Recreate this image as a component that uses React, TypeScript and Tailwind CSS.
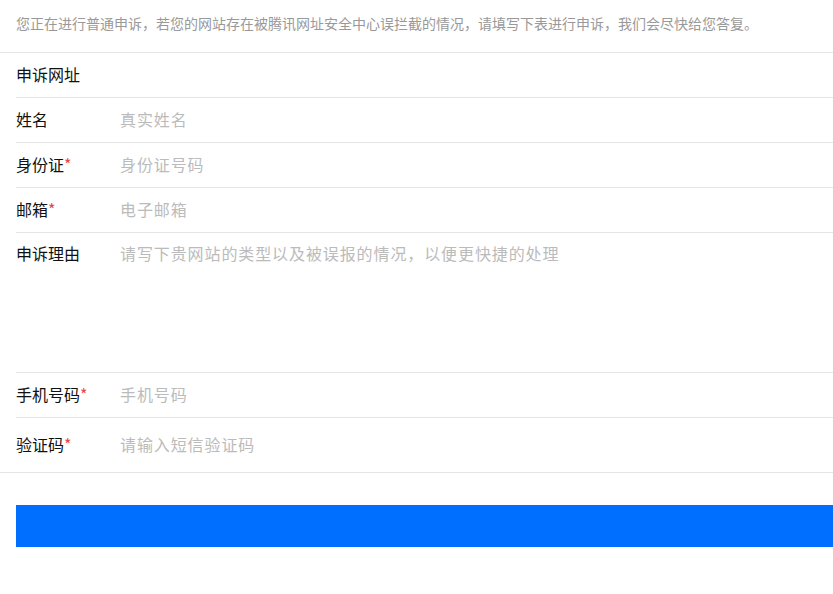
const FONT = "font-['Microsoft_YaHei','Noto_Sans_CJK_SC',sans-serif]";

function Label({ text, required }: { text: string; required?: boolean }) {
  return (
    <span className="w-[105px] shrink-0 text-[16px] text-[#111]">
      {text}
      {required ? <span className="text-[#e54545]">*</span> : null}
    </span>
  );
}

function Row({ label, placeholder, required }: { label: string; placeholder?: string; required?: boolean }) {
  return (
    <div className="ml-4 flex h-[45px] items-center border-b border-[#e5e5e5] pb-[3px]">
      <Label text={label} required={required} />
      {placeholder ? <span className="-ml-px text-[16px] tracking-[0.9px] text-[#bbb]">{placeholder}</span> : null}
    </div>
  );
}

export default function App() {
  return (
    <div className={`h-[594px] w-[833px] overflow-hidden bg-white ${FONT}`}>
      <div className="flex h-[53px] items-center border-b border-[#e5e5e5] px-4 pb-[6px]">
        <p className="whitespace-nowrap text-[14px] text-[#999]">
          您正在进行普通申诉，若您的网站存在被腾讯网址安全中心误拦截的情况，请填写下表进行申诉，我们会尽快给您答复。
        </p>
      </div>
      <Row label="申诉网址" />
      <Row label="姓名" placeholder="真实姓名" />
      <Row label="身份证" placeholder="身份证号码" required />
      <Row label="邮箱" placeholder="电子邮箱" required />
      <div className="ml-4 flex h-[140px] items-start border-b border-[#e5e5e5] pt-[8px]">
        <Label text="申诉理由" />
        <span className="-ml-px text-[16px] tracking-[0.9px] text-[#bbb]">请写下贵网站的类型以及被误报的情况，以便更快捷的处理</span>
      </div>
      <Row label="手机号码" placeholder="手机号码" required />
      <div className="flex h-[55px] items-center border-b border-[#e5e5e5] pb-[2px] pl-4">
        <Label text="验证码" required />
        <span className="-ml-px text-[16px] tracking-[0.9px] text-[#bbb]">请输入短信验证码</span>
      </div>
      <div className="pl-4 pt-[32px]">
        <button className="block h-[42px] w-full bg-[#006eff]" />
      </div>
    </div>
  );
}
